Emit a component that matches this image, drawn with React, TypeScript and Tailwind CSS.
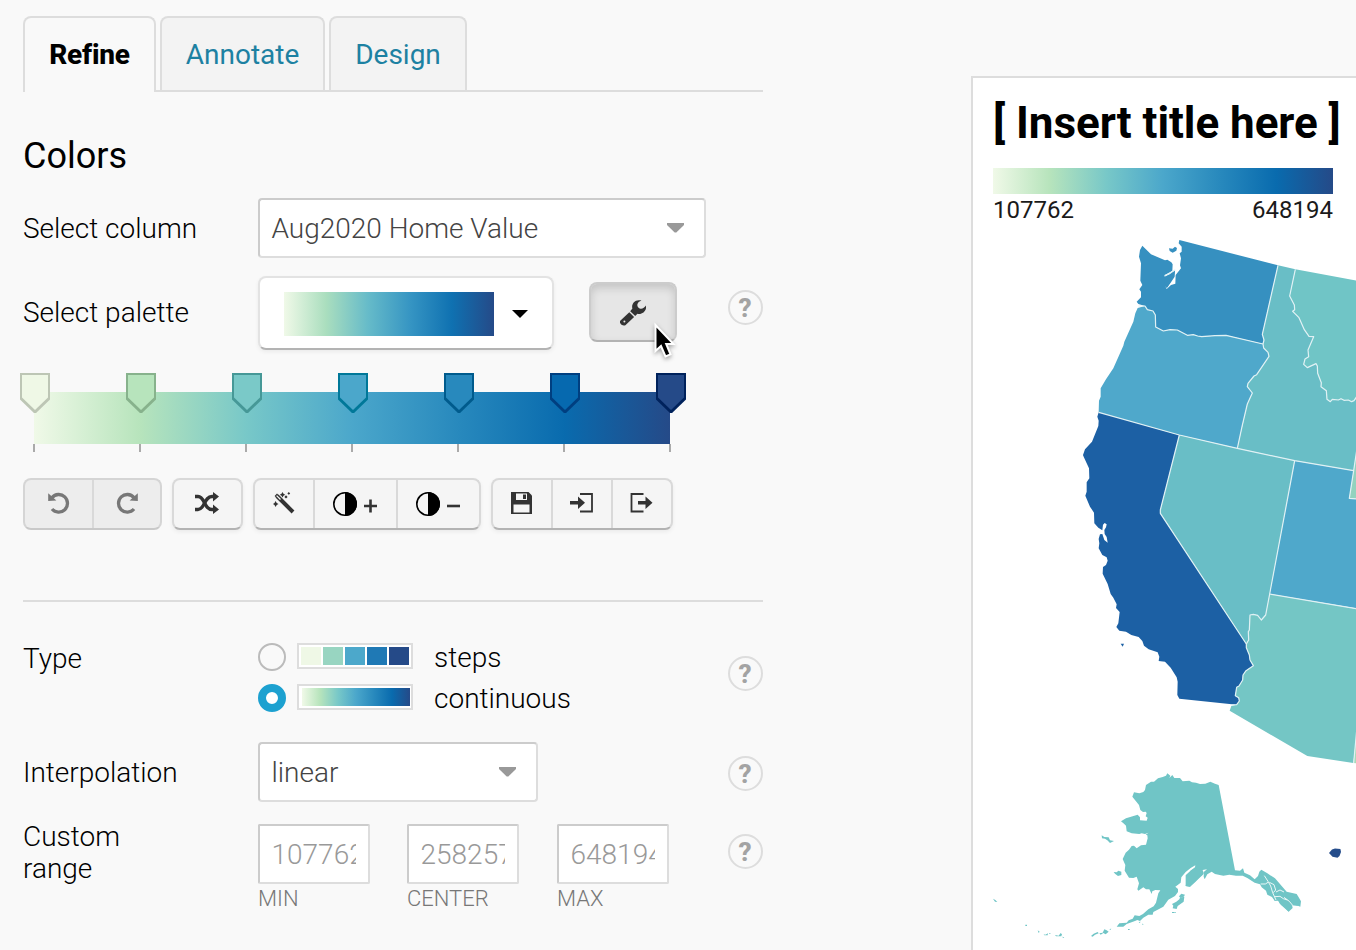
import React from 'react';

const RAMP =
  'bg-[linear-gradient(to_right,#f0f9e8_0%,#b7e4bc_16.67%,#78c8c8_33.33%,#4ba7cb_50%,#2889bd_66.67%,#096bae_83.33%,#254a88_100%)]';

const STOPS = [
  ['#eff8e6', '#bdc6b5'],
  ['#b7e4bc', '#87b28c'],
  ['#7ac9c8', '#469897'],
  ['#4ba7cb', '#007899'],
  ['#2889bd', '#005b8d'],
  ['#0669af', '#003f80'],
  ['#254a88', '#00225c'],
];

function Help({ className = '' }: { className?: string }) {
  return (
    <div
      className={`ml-auto flex h-[35px] w-[35px] items-center justify-center rounded-full border-2 border-[#ddd] pr-px text-[26px] leading-none font-extrabold text-[#a3a3a3] ${className}`}
    >
      ?
    </div>
  );
}

function Label({ children, className = '' }: { children: React.ReactNode; className?: string }) {
  return <div className={`w-[235px] shrink-0 text-[28px] leading-8 font-light text-black ${className}`}>{children}</div>;
}

function Select({ value, className }: { value: string; className: string }) {
  return (
    <div
      className={`flex h-[60px] shrink-0 items-center justify-between rounded-[4px] border-2 border-[#ddd] border-t-[#ccc] border-l-[#ccc] bg-white pl-[11.5px] pr-5 text-[28px] font-light text-[#444] ${className}`}
    >
      <span className="pt-[2px]">{value}</span>
      <svg width="17" height="10" viewBox="0 0 17 10">
        <path d="M0 0H17V2L9.3 9.5H7.7L0 2Z" fill="#999" />
      </svg>
    </div>
  );
}

function Group({ children, disabled = false }: { children: React.ReactNode; disabled?: boolean }) {
  return (
    <div
      className={`flex h-[52px] divide-x-2 divide-[#d9d9d9] rounded-[8px] border-2 ${
        disabled
          ? 'border-[#d5d5d5] border-b-[#c9c9c9] bg-[#ededed]'
          : 'border-[#d9d9d9] border-b-[#b3b3b3] bg-[#f5f5f5] shadow-[0_2px_4px_rgba(0,0,0,0.06)]'
      }`}
    >
      {children}
    </div>
  );
}

function Cell({ children, className }: { children: React.ReactNode; className: string }) {
  return <button className={`flex h-full items-center ${className}`}>{children}</button>;
}

function Turn({ flip = false }: { flip?: boolean }) {
  return (
    <svg className={flip ? '-mt-[2px] -scale-x-100' : '-mt-[2px]'} width="22" height="22" viewBox="0 0 22 22">
      <path d="M4 5.6A8.8 8.8 0 1 1 4 17" fill="none" stroke="#777" strokeWidth="3.3" />
      <path d="M.2 1.2L8.4 8.6L.2 9Z" fill="#777" />
    </svg>
  );
}

function Contrast() {
  return (
    <svg width="24" height="24" viewBox="0 0 24 24">
      <circle cx="12" cy="12" r="11.2" fill="none" stroke="#000" strokeWidth="1.6" />
      <path d="M12 0A12 12 0 0 1 12 24Z" fill="#000" />
    </svg>
  );
}

function Range({ value, name, className = '' }: { value: string; name: string; className?: string }) {
  return (
    <div className={`w-[112px] ${className}`}>
      <div className="h-[60px] rounded-[2px] border-2 border-[#ddd] border-t-[#ccc] border-l-[#ccc] bg-white pr-3 pl-[11.5px]">
        <div className="overflow-hidden pt-px text-[28px] leading-[55px] font-light whitespace-nowrap text-[#999]">{value}</div>
      </div>
      <div className="text-[22px] leading-[30px] font-light text-[#777]">{name}</div>
    </div>
  );
}

function StateMap() {
  const line = { stroke: '#e0f1f4', strokeWidth: 3.6, strokeLinejoin: 'round' as const };
  return (
    <svg className="block" width="383" height="722" viewBox="973 228 383 722">
      <g transform="translate(1070 230) scale(.333333)">
        <path fill="#3690c0" d="M328 30L624 106L577 313L582 330L579 342L468 316L435 317L395 320L383 318L370 314L352 316L322 300L300 299L280 303L257 291L256 255L249 243L232 239L225 228L205 222L200 215L213 202L213 185L208 178L217 165L211 152L213 100L207 80L210 60L217 47L243 73L285 91L292 89L304 97L308 103L307 122L284 136L284 140L299 132L315 120L312 138L302 155L289 174L284 166L290 177L303 165L316 161L317 135L333 115L330 106L333 85L329 70L335 65L335 50L326 40Z" />
        <path fill="#3690c0" d="M297 55L308 56L315 50L321 54L319 62L308 68L299 63Z" />
        <path fill="#3690c0" d="M284 163L283 142L300 134L315 121L314 140L302 158L291 174Z" />
        <path fill="#4fa8cb" d="M225 228L203 234L196 250L190 275L163 335L160 347L130 415L108 448L92 475L92 500L87 512L86 547L328 615L502 655L516 590L532 522L547 489L532 470L534 460L552 438L560 434L597 379L594 367L581 354L579 342L468 316L435 317L395 320L383 318L370 314L352 316L322 300L300 299L280 303L257 291L256 255L249 243L232 239Z" />
        <path fill="#69bec6" d="M624 106L676 118L659 198L673 225L674 239L668 244L687 263L703 299L717 319L731 320L714 360L716 380L705 387L701 403L712 413L738 401L742 408L743 430L754 458L753 470L769 482L771 508L781 515L787 508L805 510L813 506L822 511L835 510L845 515L852 512L870 495L870 600L851 722L674 692L502 655L532 522L547 489L532 470L534 460L552 438L560 434L597 379L594 367L581 354L579 342L582 330L577 313Z" />
        <path fill="#70c5c6" d="M676 118L870 154V495L852 512L845 515L835 510L822 511L813 506L805 510L787 508L781 515L771 508L769 482L753 470L754 458L743 430L742 408L738 401L712 413L701 403L705 387L716 380L714 360L731 320L717 319L703 299L687 263L668 244L674 239L673 225L659 198Z" />
        <path fill="#1c60a4" d="M86 547L82 560L86 572L85 588L66 635L45 658L39 675L41 680L57 715L58 745L50 757L50 785L46 797L60 830L72 848L73 880L85 893L97 901L99 884L104 879L110 883L108 892L103 900L104 912L110 921L113 938L103 930L97 912L90 913L86 927L88 940L86 955L97 975L110 982L113 992L108 1005L99 1011L98 1031L113 1062L122 1092L130 1103L140 1123L138 1134L149 1146L145 1180L139 1191L148 1202L168 1205L184 1215L206 1221L217 1233L222 1247L236 1258L263 1267L268 1280L266 1293L285 1295L302 1313L320 1342L323 1355L322 1395L328 1406L500 1424L508 1413L506 1403L496 1397L500 1372L507 1368L518 1350L519 1335L528 1322L550 1307L540 1290L538 1275L529 1253L529 1242L271 850L271 840L328 615Z" />
        <path fill="#1c60a4" d="M152 1241L162 1241L158 1250Z" />
        <path fill="#69bec6" d="M328 615L502 655L674 692L599 1092L587 1155L574 1170L563 1156L550 1153L540 1155L538 1200L535 1205L536 1230L529 1242L271 850L271 840Z" />
        <path fill="#4fa8cb" d="M674 692L851 722L838 805L870 808V1137L599 1092Z" />
        <path fill="#74c6c5" d="M599 1092L870 1138L858 1530L850 1599L712 1578L479 1442L484 1428L500 1424L508 1413L506 1403L496 1397L500 1372L507 1368L518 1350L519 1335L528 1322L550 1307L540 1290L538 1275L529 1253L529 1242L536 1230L535 1205L538 1200L540 1155L550 1153L563 1156L574 1170L587 1155Z" />
        <path fill="#92d2be" d="M861 655L851 722L838 805L870 808V655Z" />
        <path fill="#a8dbb8" d="M862 1480L851 1599L870 1602V1480Z" />
        <g fill="none" {...line}>
          <path d="M624 106L577 313L582 330L579 342L581 354L594 367L597 379L560 434L552 438L534 460L532 470L547 489L532 522L516 590L502 655" />
          <path d="M205 228L225 228L232 239L249 243L256 255L257 291L280 303L300 299L322 300L352 316L370 314L383 318L395 320L435 317L468 316L579 342" />
          <path d="M86 547L328 615L502 655L674 692L851 722" />
          <path d="M676 118L659 198L673 225L674 239L668 244L687 263L703 299L717 319L731 320L714 360L716 380L705 387L701 403L712 413L738 401L742 408L743 430L754 458L753 470L769 482L771 508L781 515L787 508L805 510L813 506L822 511L835 510L845 515L852 512L860 500" />
          <path d="M328 615L271 840L271 850L529 1242L529 1253L538 1275L540 1290L550 1307L528 1322L519 1335L518 1350L507 1368L500 1372L496 1397L506 1403L508 1413L500 1424L484 1425" />
          <path d="M674 692L599 1092L587 1155L574 1170L563 1156L550 1153L540 1155L538 1200L535 1205L536 1230L529 1242" />
          <path d="M599 1092L870 1138M861 655L851 722L838 805L870 808M862 1480L851 1599" />
          <path d="M316 119L300 130L284 137" />
        </g>
      </g>
      <g transform="translate(980 760) scale(.333333)" fill="#70c5c6">
        <path d="M562 40L571 47L568 54L577 45L583 54L600 54L608 64L628 62L636 67L648 68L660 72L676 71L691 65L705 71L716 75L765 331L780 332L789 325L793 338L810 346L824 358L834 348L838 335L844 329L862 340L885 355L920 395L950 402L956 412L963 424L961 440L950 436L940 433L925 426L938 441L927 448L926 455L912 440L900 432L893 420L884 422L876 411L862 404L858 392L845 382L840 373L824 368L802 354L788 347L768 347L748 344L730 347L705 342L695 335L682 343L674 358L671 350L672 335L681 328L668 330L671 342L660 350L646 364L630 380L617 378L622 353L633 331L645 322L646 316L632 324L617 336L604 352L602 368L586 380L594 387L594 396L585 408L565 419L550 440L530 451L520 456L518 464L505 464L490 473L480 483L472 480L465 483L440 492L430 500L410 500L418 490L440 488L446 481L458 476L464 466L478 468L489 462L505 448L521 439L528 428L535 400L541 391L526 390L517 394L515 402L508 388L498 388L490 382L475 392L472 388L477 370L470 350L460 354L447 353L434 332L436 315L428 297L437 278L447 269L455 258L462 257L470 265L483 256L498 254L503 235L502 226L497 224L506 218L495 222L485 220L478 222L455 220L440 214L438 197L432 191L423 184L438 175L473 164L480 172L480 181L500 182L503 173L497 169L500 159L497 155L489 156L481 150L477 135L457 110L462 97L478 100L490 96L495 90L498 75L513 65L522 65L534 55L548 51L558 47Z" />
        <path d="M617 346L633 331L645 326L660 328L671 336L667 346L655 357L646 366L630 380L617 378Z" />
        <path d="M576 432L589 425L598 418L600 413L613 410L611 425L593 438L590 447L578 445L580 437Z" />
        <path d="M597 409L604 401L615 404L610 412L601 414Z" />
        <path d="M365 226L373 231L386 232L390 241L402 243L390 249L382 241L375 236L366 235Z" />
        <path d="M401 336L410 337L415 332L424 335L424 345L414 348L405 341Z" />
        <path d="M39 416L46 420L52 426L45 425Z M136 494H141V498H136Z M173 511L179 515L176 519Z M191 523L196 524L204 520L203 526H193Z M225 525L236 527L242 519L246 523L244 529H228Z M246 530L253 532L250 534Z M333 528L341 521L353 516L356 520L345 524L338 530Z M358 520L368 518L373 508L380 511L386 515L377 523L370 519L362 524Z M388 507L394 506L391 510Z M444 507H449V510H444Z M476 486L482 485L479 489Z M486 491L491 492L488 495Z M576 456H582V459H576Z M583 456H587V459H583Z M208 519H211V522H208Z" />
        <path d="M876 404L900 398L925 415L945 425L955 438L935 436L938 444L926 455L904 436L896 422L884 422Z" />
        <g fill="none" stroke="#fff" strokeWidth="2.6">
          <path d="M853 347L864 364L872 378L878 398L888 420M842 372L856 372L864 367M868 367L882 374L887 390L880 398M888 396L900 390L912 396M884 410L900 409L910 416L922 420M912 412L928 424L938 436" />
        </g>
      </g>
      <path d="M1329 853L1332 849.5L1335 848.4L1340.4 849L1341 852L1339.5 856L1337.5 857.8L1332.5 856.8Z" fill="#254d8b" />
    </svg>
  );
}

export default function App() {
  return (
    <div className="relative flex h-[950px] w-[1356px] overflow-hidden bg-[#f9f9f9] font-['Roboto',sans-serif] text-black">
      <main className="ml-[23px] w-[740px] shrink-0 pt-4">
        <nav className="flex h-[76px] items-start gap-[4px] border-b-2 border-[#ddd] text-[28px] text-[#1d81a2]">
          <div className="flex h-[76px] w-[133px] shrink-0 justify-center rounded-t-[8px] border-2 border-b-0 border-[#ddd] bg-[#f9f9f9] pt-[21px] leading-8 font-extrabold tracking-[-0.2px] text-black">
            Refine
          </div>
          <div className="flex h-[74px] w-[165px] shrink-0 justify-center rounded-t-[8px] border-2 border-b-0 border-[#ddd] bg-[#f3f3f3] pt-[21px] leading-8">
            Annotate
          </div>
          <div className="flex h-[74px] w-[138px] shrink-0 justify-center rounded-t-[8px] border-2 border-b-0 border-[#ddd] bg-[#f3f3f3] pt-[21px] leading-8">
            Design
          </div>
        </nav>

        <h2 className="h-[106px] pt-[43px] text-[36px] leading-[42px] font-normal">Colors</h2>

        <div className="flex h-[60px] items-center">
          <Label className="pt-[2px]">Select column</Label>
          <Select value="Aug2020 Home Value" className="w-[448px]" />
        </div>

        <div className="mt-[18px] flex h-[74px]">
          <Label className="mt-[21px]">Select palette</Label>
          <div className="flex h-[74px] w-[296px] shrink-0 items-center rounded-[8px] border-2 border-[#e3e3e3] border-b-[#b3b3b3] bg-white pt-[2px] pl-6 shadow-[0_2px_4px_rgba(0,0,0,0.06)]">
            <div className="h-[44px] w-[210px] bg-[linear-gradient(to_right,#f0f9e8_0%,#aadebe_20%,#66bbc9_40%,#3695c3_60%,#0f71b1_80%,#254a88_100%)]" />
            <svg className="ml-[18px]" width="16" height="8" viewBox="0 0 16 8">
              <path d="M0 0H16L8 8Z" fill="#000" />
            </svg>
          </div>
          <div className="mt-[6px] ml-[35px] flex h-[60px] w-[88px] shrink-0 items-center justify-center rounded-[8px] border-2 border-[#ccc] border-b-[#b3b3b3] bg-[#e6e6e6] shadow-[inset_0_4px_8px_rgba(0,0,0,0.15)]">
            <svg className="mt-[2px]" width="26" height="26" viewBox="0 0 26 26">
              <path
                d="M21.5.6C15-1.5 11 4 12.4 8.6L10.2 11.2L15.2 16L17.4 13.8C22 15 27 11 26 5.5C24.5 7.5 22.5 9.2 20.5 8.8C17.5 8.3 16.5 5 18 3C18.8 1.8 20.2 1 21.5.6Z"
                fill="#333"
              />
              <path d="M9.3 12.2L14.1 17L5.4 25.2C3 26.6-.6 24-.1 21Z" fill="#333" />
              <circle cx="4.4" cy="21.4" r="1" fill="#e6e6e6" />
            </svg>
          </div>
          <Help className="mt-[14px]" />
        </div>

        <section className="mt-[23px] h-[79px]">
          <div className="relative z-10 -ml-[3px] -mb-[21px] flex w-[666px] justify-between">
            {STOPS.map(([fill, edge]) => (
              <svg key={fill} width="30" height="40" viewBox="0 0 30 40">
                <path d="M0 0H30V26.5L15 41L0 26.5Z" fill={edge} />
                <path d="M2 2H28V24.5L15 37L2 24.5Z" fill={fill} />
              </svg>
            ))}
          </div>
          <div className={`ml-[11px] h-[52px] w-[636px] ${RAMP}`} />
          <div className="ml-[10px] flex w-[638px] justify-between">
            {STOPS.map(([fill]) => (
              <span key={fill} className="h-2 w-[2px] bg-[#aaa]" />
            ))}
          </div>
        </section>

        <div className="mt-[26px] flex gap-[10px]">
          <Group disabled>
            <Cell className="w-[69px] justify-center"><Turn /></Cell>
            <Cell className="w-[66px] justify-center"><Turn flip /></Cell>
          </Group>
          <Group>
            <Cell className="w-[67px] justify-center pr-[2px]">
              <svg className="-mt-[2px]" width="24" height="22" viewBox="0 0 24 22">
                <g fill="none" stroke="#333" strokeWidth="3.3">
                  <path d="M0 4.5H3C10 4.5 9 17.5 17 17.5H19" />
                  <path d="M0 17.5H3C10 17.5 9 4.5 17 4.5H19" />
                </g>
                <path d="M18 0L24 4.5L18 9.5ZM18 12.5L24 17.5L18 22Z" fill="#333" />
              </svg>
            </Cell>
          </Group>
          <Group>
            <Cell className="w-[60px] justify-center">
              <svg className="-mt-[2px]" width="22" height="22" viewBox="0 0 22 22">
                <path d="M4 4L20 20" stroke="#333" strokeWidth="4" />
                <path d="M2.8 2.8L9 9" stroke="#333" strokeWidth="3.4" />
                <path d="M3.6 3.6L7.5 7.5" stroke="#f5f5f5" strokeWidth="1.3" />
                <path d="M9.5 0L10.5 1.7L12.2 2.7L10.5 3.7L9.5 5.4L8.5 3.7L6.8 2.7L8.5 1.7ZM15.8 0L17.2 1.4L15.8 2.8L14.4 1.4ZM13 3.3L14.6 4.9L13 6.5L11.4 4.9ZM2.6 9L3.7 11L5.5 12L3.7 13L2.6 15L1.5 13L-.2 12L1.5 11Z" fill="#333" />
              </svg>
            </Cell>
            <Cell className="w-[83px] gap-[7px] pl-[18px]">
              <Contrast />
              <svg className="mt-[4px]" width="13" height="14" viewBox="0 0 13 14"><path d="M0 7H13M6.5 .5V13.5" stroke="#333" strokeWidth="2.6" /></svg>
            </Cell>
            <Cell className="w-[81px] gap-[7px] pl-[18px]">
              <Contrast />
              <svg className="mt-[4px]" width="13" height="14" viewBox="0 0 13 14"><path d="M0 7H13" stroke="#333" strokeWidth="2.6" /></svg>
            </Cell>
          </Group>
          <Group>
            <Cell className="w-[60px] justify-center pr-[2px]">
              <svg className="-mt-[2px]" width="21" height="22" viewBox="0 0 21 22">
                <path d="M0 0H17.5L21 3.5V22H0Z" fill="#333" />
                <path d="M5 1.5H16V8H5ZM2.5 12.5H18.5V20.5H2.5Z" fill="#f5f5f5" />
                <path d="M12 2.5H15V7H12Z" fill="#333" />
              </svg>
            </Cell>
            <Cell className="w-[60px] justify-center pr-px">
              <svg className="-mt-[2px]" width="23" height="20" viewBox="0 0 23 20">
                <path d="M10 1H22V18.5H10" fill="none" stroke="#333" strokeWidth="1.8" />
                <path d="M0 8H8V3.5L15 9.8L8 16V11.5H0Z" fill="#333" />
              </svg>
            </Cell>
            <Cell className="w-[58px] justify-center pr-[2px]">
              <svg className="-mt-[2px]" width="23" height="20" viewBox="0 0 23 20">
                <path d="M13.5 1H1.5V18.5H13.5" fill="none" stroke="#333" strokeWidth="1.8" />
                <path d="M8 8H15.5V3.5L22.5 9.8L15.5 16V11.5H8Z" fill="#333" />
              </svg>
            </Cell>
          </Group>
        </div>

        <div className="mt-[70px] h-[2px] bg-[#ddd]" />

        <div className="mt-[41px] flex h-[69px]">
          <Label>Type</Label>
          <div className="flex w-[330px] flex-col gap-[13px] text-[28px] leading-7 font-light">
            <div className="flex h-7 items-start">
              <span className="h-7 w-7 rounded-full border-2 border-[#bbb]" />
              <span className="ml-[11px] flex h-[26px] w-[116px] gap-[2px] border-2 border-[#ddd] bg-white p-[2px]">
                <i className="w-5 bg-[#eff8e6]" />
                <i className="w-5 bg-[#98d5c1]" />
                <i className="w-5 bg-[#4ca8cb]" />
                <i className="w-5 bg-[#1f79b5]" />
                <i className="w-5 bg-[#254a88]" />
              </span>
              <span className="ml-[21px] pt-px">steps</span>
            </div>
            <div className="flex h-7 items-start">
              <span className="h-7 w-7 rounded-full border-8 border-[#1da1d0] bg-white" />
              <span className="ml-[11px] h-[26px] w-[116px] border-2 border-[#ddd] bg-white py-[2px] pr-px pl-[3px]">
                <i className={`block h-[18px] ${RAMP}`} />
              </span>
              <span className="ml-[21px] pt-px">continuous</span>
            </div>
          </div>
          <Help className="mt-[13px]" />
        </div>

        <div className="mt-[30px] flex h-[60px] items-center">
          <Label className="pt-[2px]">Interpolation</Label>
          <Select value="linear" className="w-[280px]" />
          <Help className="mt-[3px]" />
        </div>

        <div className="mt-[22px] flex">
          <Label className="-mt-[3px] pr-24">Custom range</Label>
          <Range value="107762" name="MIN" />
          <Range value="258257" name="CENTER" className="ml-[37px]" />
          <Range value="648194" name="MAX" className="ml-[38px]" />
          <Help className="mt-[10px]" />
        </div>
      </main>

      <aside className="mt-[76px] ml-[208px] h-[874px] w-[385px] shrink-0 border-t-2 border-l-2 border-[#ddd] bg-white">
        <div className="h-[150px] pt-5 pl-5">
          <h1 className="text-[44px] leading-[50px] font-bold tracking-[-0.05px] whitespace-nowrap">[ Insert title here ]</h1>
          <div className={`mt-[20px] h-[26px] w-[340px] ${RAMP}`} />
          <div className="flex w-[340px] justify-between text-[24px] leading-8 text-[#1a1a1a]">
            <span>107762</span>
            <span>648194</span>
          </div>
        </div>
        <StateMap />
      </aside>

      <svg className="absolute top-[318px] left-[650px] drop-shadow-[0_2px_2px_rgba(0,0,0,0.35)]" width="28" height="44" viewBox="0 0 28 44">
        <path d="M5.5 7V33L11 28L15.5 38.5L20.5 36.3L16.2 26H23.5Z" fill="#000" stroke="#fff" strokeWidth="2" />
      </svg>
    </div>
  );
}
